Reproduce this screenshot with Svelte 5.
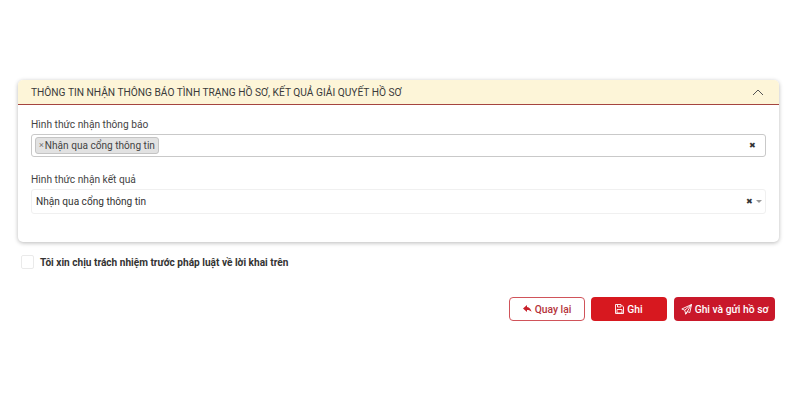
<script>
  const title = 'THÔNG TIN NHẬN THÔNG BÁO TÌNH TRẠNG HỒ SƠ, KẾT QUẢ GIẢI QUYẾT HỒ SƠ';
  const value = 'Nhận qua cổng thông tin';
</script>

<div class="page">
  <section class="card">
    <header class="head">
      <span>{title}</span>
      <svg class="chev" width="12" height="7" viewBox="0 0 12 7"><path d="M1 6l5-5 5 5" fill="none" stroke="#555" stroke-width="1"/></svg>
    </header>
    <div class="body">
      <div class="label first">Hình thức nhận thông báo</div>
      <div class="multi">
        <span class="tag"><span class="tx">×</span>{value}</span>
        <span class="clear">✖</span>
      </div>
      <div class="label second">Hình thức nhận kết quả</div>
      <div class="single">
        <span>{value}</span>
        <span class="clear">✖</span>
        <span class="caret"></span>
      </div>
    </div>
  </section>

  <div class="agree">
    <span class="check"></span>
    <span>Tôi xin chịu trách nhiệm trước pháp luật về lời khai trên</span>
  </div>

  <div class="actions">
    <button class="btn outline">
      <svg width="9" height="8" viewBox="0 0 9 8"><path d="M4 0L0 3.500 4 7V5c2 0 3.500.5 4.500 2C8.300 4.500 6.500 2.300 4 2z" fill="#c8202a"/></svg>
      Quay lại
    </button>
    <button class="btn solid save">
      <svg width="9" height="10" viewBox="0 0 9 10"><path d="M.5.500h5.500l2.500 2.500v6.500h-8zM2.500 1v2h3.500V1M2 5.500h5v3.500H2z" fill="none" stroke="#fff" stroke-width=".9"/></svg>
      Ghi
    </button>
    <button class="btn solid send">
      <svg width="11" height="11" viewBox="0 0 11 11"><path d="M10.500.5L.8 5l3 1.200.9 4 1.600-2.600 2.500 1zM3.800 6.200L10.500.5 4.700 10.200" fill="none" stroke="#fff" stroke-width=".9" stroke-linejoin="round"/></svg>
      Ghi và gửi hồ sơ
    </button>
  </div>
</div>

<style>
  :global(body) { margin: 0; background: #fff; }
  .page {
    width: 800px;
    height: 420px;
    box-sizing: border-box;
    padding: 80px 21px 0 18px;
    font-family: Roboto, "Liberation Sans", sans-serif;
    font-size: 10.1px;
    color: #333;
    overflow: hidden;
  }
  .card {
    border-radius: 5px;
    background: #fff;
    height: 162px;
    box-shadow: 0 1px 4px rgba(0,0,0,.28);
  }
  .head {
    height: 24px;
    background: #fdf5d8;
    border-bottom: 1px solid #a5453f;
    border-radius: 5px 5px 0 0;
    padding: 0 15px 0 13px;
    display: flex;
    align-items: center;
    justify-content: space-between;
    font-size: 10.2px;
    color: #3a3a3a;
  }
  .chev { display: block; }
  .body { padding: 0 13px; }
  .label { line-height: 14px; color: #444; font-size: 10.2px; }
  .label.first { padding-top: 13px; margin-bottom: 2px; }
  .label.second { margin-top: 16px; margin-bottom: 2px; }
  .multi {
    height: 23px;
    box-sizing: border-box;
    border: 1px solid #c9c9c9;
    border-radius: 3px;
    display: flex;
    align-items: center;
    justify-content: space-between;
    padding: 0 9px 0 3px;
  }
  .tag {
    height: 15px;
    line-height: 15px;
    background: #e2e2e2;
    border: 1px solid #c4c4c4;
    border-radius: 3px;
    padding: 0 3px 0 3px;
    display: flex;
    align-items: center;
    color: #444;
  }
  .tx { color: #777; margin-right: 1px; font-size: 9px; }
  .clear { font-size: 8px; color: #333; margin-left: auto; }
  .single {
    height: 25px;
    box-sizing: border-box;
    border: 1px solid #f0f0f0;
    border-radius: 3px;
    display: flex;
    align-items: center;
    padding: 0 3px 0 4px;
  }
  .caret {
    width: 0;
    height: 0;
    border: 3px solid transparent;
    border-top: 3px solid #999;
    border-bottom: 0;
    margin-left: 3px;
  }
  .agree {
    display: flex;
    align-items: center;
    gap: 6px;
    margin: 13px 0 0 3px;
    height: 14px;
    font-weight: 700;
    color: #333;
    font-size: 10.1px;
  }
  .check {
    width: 11px;
    height: 12px;
    border: 1px solid #eaeaea;
    border-radius: 2px;
  }
  .actions {
    display: flex;
    justify-content: flex-end;
    gap: 6px;
    margin-top: 28px;
    padding-right: 4px;
  }
  .btn {
    height: 24px;
    border-radius: 4px;
    font: 500 10.3px Roboto, "Liberation Sans", sans-serif;
    display: flex;
    align-items: center;
    justify-content: center;
    gap: 3px;
    padding: 0;
  }
  .outline { width: 76px; background: #fff; border: 1px solid #d0535a; color: #b5333b; }
  .solid { background: #d7181f; border: 0; color: #fff; }
  .save { width: 76px; }
  .send { width: 101px; background: #c9182a; margin-left: 1px; }
</style>
